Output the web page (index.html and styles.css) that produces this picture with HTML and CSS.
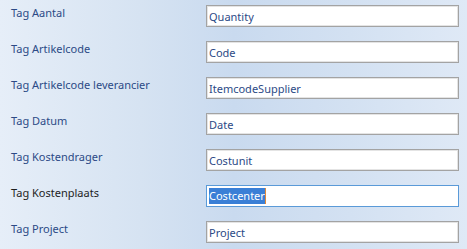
FILE: index.html
```html
<!DOCTYPE html>
<html>
<head>
<meta charset="utf-8">
<link rel="stylesheet" href="styles.css">
</head>
<body>
<div class="form">
  <div class="row"><div class="label">Tag Aantal</div><div class="field">Quantity</div></div>
  <div class="row"><div class="label">Tag Artikelcode</div><div class="field">Code</div></div>
  <div class="row"><div class="label">Tag Artikelcode leverancier</div><div class="field">ItemcodeSupplier</div></div>
  <div class="row"><div class="label">Tag Datum</div><div class="field">Date</div></div>
  <div class="row"><div class="label">Tag Kostendrager</div><div class="field">Costunit</div></div>
  <div class="row"><div class="label active">Tag Kostenplaats</div><div class="field focused"><span class="sel">Costcenter</span><span class="caret"></span></div></div>
  <div class="row"><div class="label">Tag Project</div><div class="field">Project</div></div>
</div>
</body>
</html>
```
FILE: styles.css
```css
html, body {
  margin: 0;
  padding: 0;
}
body {
  width: 467px;
  height: 249px;
  overflow: hidden;
  background: linear-gradient(to right, #e6eef8 0%, #d6e3f2 30%, #c9daef 50%, #d3e1f2 75%, #dfe9f6 100%);
  font-family: "Noto Sans", "Open Sans", sans-serif;
  font-size: 11px;
}
.form {
  display: flex;
  flex-direction: column;
  padding: 5px 0 0 11px;
}
.row {
  display: grid;
  grid-template-columns: 195px 253px;
  height: 36px;
}
.label {
  color: #2c4a86;
  line-height: 15px;
  padding-top: 0;
}
.label.active {
  color: #1e1e1e;
}
.field {
  box-sizing: border-box;
  height: 22px;
  background: #fff;
  border: 1px solid #a3a3a3;
  box-shadow: inset 0 0 0 1px #e4e4e4;
  color: #2c4a86;
  line-height: 19px;
  padding-left: 2px;
  display: flex;
  align-items: center;
}
.field.focused {
  border-color: #5a9ad8;
  box-shadow: none;
}
.sel {
  background: #3a7fd6;
  color: #fff;
  line-height: 16px;
}
.caret {
  width: 1px;
  height: 16px;
  background: #e08a3a;
}
```
